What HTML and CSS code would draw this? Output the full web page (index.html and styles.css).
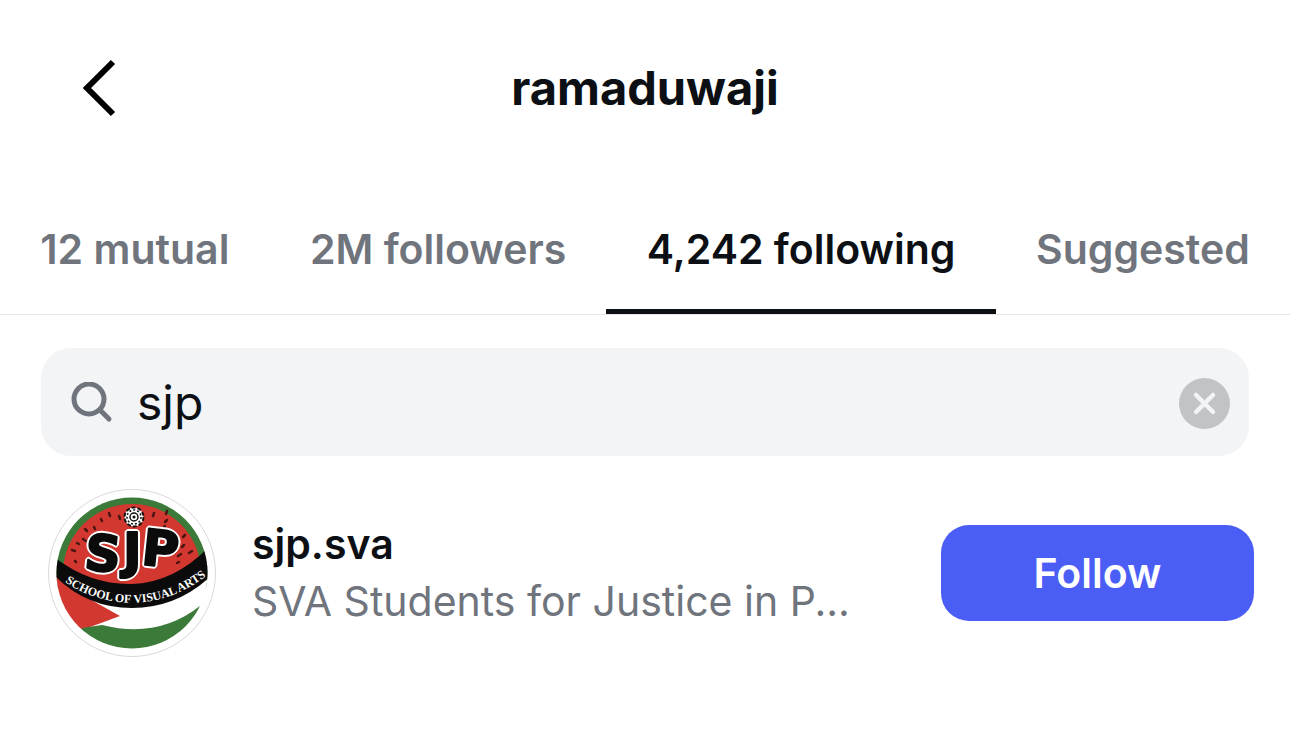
FILE: index.html
```html
<!DOCTYPE html>
<html lang="en">
<head>
    <meta charset="UTF-8">
    <meta name="viewport" content="width=device-width, initial-scale=1.0">
    <title>ramaduwaji</title>
    <link rel="stylesheet" href="styles.css">
</head>
<body>
    <header>
        <button class="back" type="button" aria-label="Back">
            <svg width="34" height="58" viewBox="0 0 34 58"><path d="M31 3 L5 29 L31 55" fill="none" stroke="#000" stroke-width="6"/></svg>
        </button>
        <h1>ramaduwaji</h1>
    </header>

    <nav>
        <a href="#mutual">12 mutual</a>
        <a href="#followers">2M followers</a>
        <a href="#following" class="active" aria-current="page">4,242 following</a>
        <a href="#suggested">Suggested</a>
    </nav>

    <main>
        <form class="search">
            <label for="search" aria-label="Search">
                <svg width="42" height="42" viewBox="0 0 42 42"><g fill="none" stroke="#6f747d" stroke-width="5" stroke-linecap="round"><circle cx="18" cy="17" r="15"/><path d="M29 28 L38 37"/></g></svg>
            </label>
            <input type="text" id="search" name="search" value="sjp" autocomplete="off">
            <button class="clear" type="reset" aria-label="Clear">
                <svg width="51" height="51" viewBox="0 0 51 51"><circle cx="25.500" cy="25.500" r="25.500" fill="#c2c3c5"/><path d="M17 17 L34 34 M34 17 L17 34" stroke="#f3f4f6" stroke-width="4.500" stroke-linecap="round"/></svg>
            </button>
        </form>

        <div class="user">
            <svg class="avatar" width="168" height="168" viewBox="0 0 168 168" role="img" aria-label="sjp.sva">
                <defs>
                    <clipPath id="disc"><circle cx="84" cy="84" r="75.500"/></clipPath>
                    <path id="curve" d="M17 93 Q46 113 84 114 Q126 113 162 84"/>
                </defs>
                <circle cx="84" cy="84" r="83.500" fill="#fff" stroke="#d9d9dc"/>
                <g clip-path="url(#disc)">
                    <rect width="168" height="100" fill="#3b7a38"/>
                    <circle cx="84" cy="84" r="69" fill="#d2382f"/>
                    <path d="M0 82 Q84 150 168 82 V168 H0 Z" fill="#fff"/>
                    <path d="M0 80 L29 103 L72 127 L34 141 L0 160 Z" fill="#d2382f"/>
                    <path d="M34 139 L54 136 Q110 150 152 117 L168 168 H34 Z" fill="#3b7a38"/>
                    <path d="M6 68 Q42 96 84 95 Q126 94 162 57 L162 88 Q128 119 84 119 Q38 119 6 86 Z" fill="#0b0b0b"/>
                </g>
                <!-- seeds -->
                <g stroke="#4a1512" stroke-width="2.500" stroke-linecap="round">
                    <path d="M53 30l1 2M61 24l1 3M71 27l1 3M37 40l2 2M46 38l1 2M35 50l3 2M29 54l2 1M24 61l3 1M27 72l1 1M106 24l-1 3M119 22l-1 3M119 31l-2 2M117 37l-1 1M137 46l-2 2M136 56l-2 2M144 62l-3 2M133 65l-3 2M131 73l-2 1"/>
                </g>
                <!-- flower -->
                <circle cx="86" cy="28" r="9.500" fill="#fff" stroke="#111" stroke-width="2" stroke-dasharray="4 2"/>
                <circle cx="86" cy="28" r="7" fill="none" stroke="#111" stroke-width="1.500" stroke-dasharray="2 2"/>
                <circle cx="86" cy="28" r="4" fill="none" stroke="#111" stroke-width="1.500"/>
                <circle cx="86" cy="28" r="1.500" fill="#111"/>
                <g class="logo-letters">
                    <text x="37" y="82" transform="rotate(6 56 64)">S</text>
                    <text x="75" y="79">J</text>
                    <text x="94" y="77" transform="rotate(6 110 62)">P</text>
                </g>
                <text class="logo-band"><textPath href="#curve">SCHOOL OF VISUAL ARTS</textPath></text>
            </svg>
            <div class="info">
                <a href="#sjp.sva">sjp.sva</a>
                <p>SVA Students for Justice in P...</p>
            </div>
            <button class="follow" type="button">Follow</button>
        </div>
    </main>
</body>
</html>
```
FILE: styles.css
```css
* {
    box-sizing: border-box;
}
body {
    font-family: Inter, 'Liberation Sans', sans-serif;
    background: #fff;
    color: #0c1014;
    margin: 0;
}
button {
    border: none;
    padding: 0;
    background: none;
    font-family: inherit;
    cursor: pointer;
}
svg {
    display: block;
}
header {
    display: grid;
    grid-template-columns: 1fr auto 1fr;
    align-items: center;
    height: 176px;
    padding: 0 82px;
}
.back {
    justify-self: start;
}
h1 {
    font-size: 47px;
    line-height: 60px;
    font-weight: 700;
    margin: 0;
}
nav {
    display: flex;
    border-bottom: 1px solid #e6e7e9;
}
nav a {
    flex: 1 1 auto;
    padding: 47px 36px 33px;
    border-bottom: 5px solid transparent;
    color: #6f747d;
    font-size: 41px;
    line-height: 53px;
    font-weight: 600;
    text-align: center;
    text-decoration: none;
    white-space: nowrap;
}
nav a.active {
    color: #0c1014;
    border-bottom-color: #0c1014;
}
.search {
    display: flex;
    align-items: center;
    gap: 24px;
    height: 108px;
    margin: 33px 41px;
    padding: 2px 19px 0 30px;
    border-radius: 30px;
    background: #f3f4f6;
}
.search input {
    flex: 1;
    min-width: 0;
    padding: 0;
    border: none;
    outline: none;
    background: none;
    color: #0c1014;
    font-family: inherit;
    font-size: 48px;
    line-height: 60px;
}
.user {
    display: flex;
    align-items: center;
    padding: 0 36px 0 48px;
}
.avatar {
    flex: none;
    margin-right: 36px;
}
.info {
    flex: 1;
    min-width: 0;
    font-size: 41px;
    line-height: 57px;
}
.info a {
    color: #0c1014;
    font-weight: 600;
    text-decoration: none;
}
.info p {
    margin: 0;
    color: #6f747d;
    overflow: hidden;
    white-space: nowrap;
}
.follow {
    width: 313px;
    height: 96px;
    border-radius: 28px;
    background: #4a5df5;
    color: #fff;
    font-size: 41px;
    font-weight: 600;
}
.logo-letters {
    font-family: 'DejaVu Sans', sans-serif;
    font-size: 50px;
    font-weight: 700;
    fill: #0b0b0b;
    stroke: #0b0b0b;
    stroke-width: 2px;
    stroke-linejoin: round;
    filter: drop-shadow(1px 1px 0 #fff) drop-shadow(-1px -1px 0 #fff) drop-shadow(1px -1px 0 #fff) drop-shadow(-1px 1px 0 #fff);
}
.logo-band {
    font-family: 'Liberation Serif', serif;
    font-size: 12px;
    font-weight: 700;
    fill: #fff;
}
```
